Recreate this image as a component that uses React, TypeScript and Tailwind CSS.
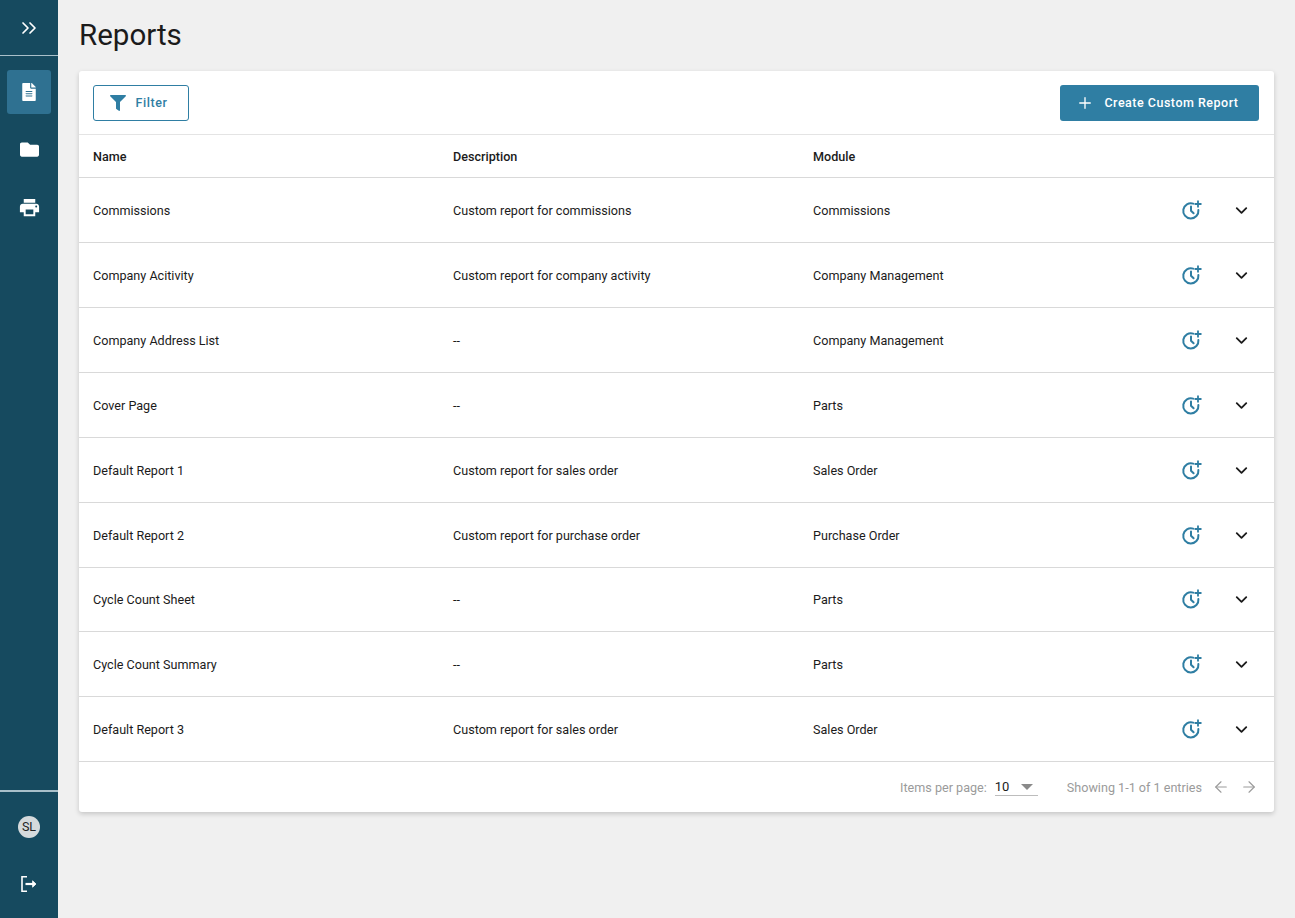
import { ArrowLeft, ArrowRight, ChevronDown, ChevronsRight, Plus } from "lucide-react";
import { FaFileAlt, FaFilter, FaFolder } from "react-icons/fa";
import { MdPrint } from "react-icons/md";

const rows = [
  ["Commissions", "Custom report for commissions", "Commissions"],
  ["Company Acitivity", "Custom report for company activity", "Company Management"],
  ["Company Address List", "--", "Company Management"],
  ["Cover Page", "--", "Parts"],
  ["Default Report 1", "Custom report for sales order", "Sales Order"],
  ["Default Report 2", "Custom report for purchase order", "Purchase Order"],
  ["Cycle Count Sheet", "--", "Parts"],
  ["Cycle Count Summary", "--", "Parts"],
  ["Default Report 3", "Custom report for sales order", "Sales Order"],
];

function ClockPlus() {
  return (
    <svg width="22" height="22" viewBox="0 0 22 22" fill="none" stroke="#2f7ea3" strokeWidth="2">
      <path d="M12.2 4.6A7.6 7.6 0 1 0 17.4 11" strokeLinecap="round" />
      <path d="M10 7.5v4.2l2.6 2.6" strokeLinecap="round" strokeLinejoin="round" />
      <path d="M17 1.5v7M13.5 5h7" strokeWidth="1.8" />
    </svg>
  );
}

function LogoutIcon() {
  return (
    <svg width="18" height="18" viewBox="0 0 18 18" fill="none" stroke="white" strokeWidth="1.6">
      <path d="M7 1.8H2v14.4h5" />
      <path d="M5.5 9h9" strokeWidth="2.2" />
      <path d="M12.6 5.8 16 9l-3.4 3.2z" fill="white" strokeWidth="0.8" />
    </svg>
  );
}

function Sidebar() {
  return (
    <aside className="flex h-[918px] w-[58px] shrink-0 flex-col bg-[#164a5f]">
      <div className="flex h-[56px] items-center justify-center border-b border-[#a9c0ca]">
        <ChevronsRight size={24} color="white" strokeWidth={1.7} />
      </div>
      <nav className="flex flex-1 flex-col items-center pt-[14px]">
        <div className="flex h-[44px] w-[44px] items-center justify-center rounded-[3px] bg-[#2f7191]">
          <FaFileAlt size={18} color="white" />
        </div>
        <div className="mt-[13px] flex h-[44px] w-[44px] items-center justify-center">
          <FaFolder size={19} color="white" />
        </div>
        <div className="mt-[14px] flex h-[44px] w-[44px] items-center justify-center">
          <MdPrint size={23} color="white" />
        </div>
      </nav>
      <div className="flex h-[128px] flex-col items-center border-t-2 border-[#a9c0ca] pt-[24px]">
        <div className="flex h-[22px] w-[22px] items-center justify-center rounded-full bg-[#d5dadc] text-[12.5px] text-[#222]">
          SL
        </div>
        <div className="mt-[37px]">
          <LogoutIcon />
        </div>
      </div>
    </aside>
  );
}

export default function App() {
  return (
    <div className="flex h-[918px] w-[1295px] overflow-hidden bg-[#f0f0f0] font-['Roboto',sans-serif] text-[#1b1b1b]">
      <Sidebar />
      <main className="flex-1 pl-[21px] pr-[21px]">
        <h1 className="h-[71px] pt-[17px] text-[29.5px] leading-[36px] font-normal">Reports</h1>
        <section className="rounded-[3px] bg-white shadow-[0_2px_5px_rgba(0,0,0,0.18)]">
          <div className="flex h-[64px] items-center justify-between border-b border-[#e4e4e4] pr-[15px] pl-[14px]">
            <button className="flex h-[36px] w-[96px] items-center justify-center gap-[9px] rounded-[3px] border border-[#2f7ea3] pr-[4px] text-[12.5px] font-medium tracking-[0.6px] text-[#2f7ea3]">
              <FaFilter size={16} />
              <span className="pt-[2px]">Filter</span>
            </button>
            <button className="flex h-[36px] w-[199px] items-center justify-center gap-[10px] rounded-[3px] bg-[#2f7ea3] pr-[4px] text-[12.5px] font-medium tracking-[0.5px] text-white">
              <Plus size={18} strokeWidth={1.8} />
              <span className="pt-[2px]">Create Custom Report</span>
            </button>
          </div>
          <div className="flex h-[43.2px] items-center border-b border-[#d9d9d9] pt-[2px] pl-[14px] text-[12.6px] font-medium">
            <div className="w-[360px]">Name</div>
            <div className="w-[360px]">Description</div>
            <div>Module</div>
          </div>
          {rows.map((row, i) => (
            <div key={i} className="flex h-[64.9px] items-center border-b border-[#d9d9d9] pl-[14px] text-[12.6px]">
              <div className="w-[360px] pt-[2.8px]">{row[0]}</div>
              <div className="w-[360px] pt-[2.8px]">{row[1]}</div>
              <div className="flex-1 pt-[2.8px]">{row[2]}</div>
              <div className="mr-[23px] flex items-center">
                <ClockPlus />
                <ChevronDown className="mt-[1px] ml-[29px]" size={19} strokeWidth={2.3} />
              </div>
            </div>
          ))}
          <div className="flex h-[49.8px] items-center justify-end pr-[16px] text-[12.6px] text-[#9b9b9b]">
            <span className="pt-[2px]">Items per page:</span>
            <div className="ml-[8px] flex h-[17px] w-[43px] items-center justify-between border-b border-[#bdbdbd] pr-[5px] text-[13px] text-[#1b1b1b]">
              10
              <span className="h-0 w-0 border-x-[6px] border-t-[6px] border-x-transparent border-t-[#8a8a8a]" />
            </div>
            <span className="ml-[29px] pt-[2px]">Showing 1-1 of 1 entries</span>
            <ArrowLeft className="ml-[10px]" size={18} strokeWidth={1.5} />
            <ArrowRight className="ml-[10px]" size={18} strokeWidth={1.5} />
          </div>
        </section>
      </main>
    </div>
  );
}
